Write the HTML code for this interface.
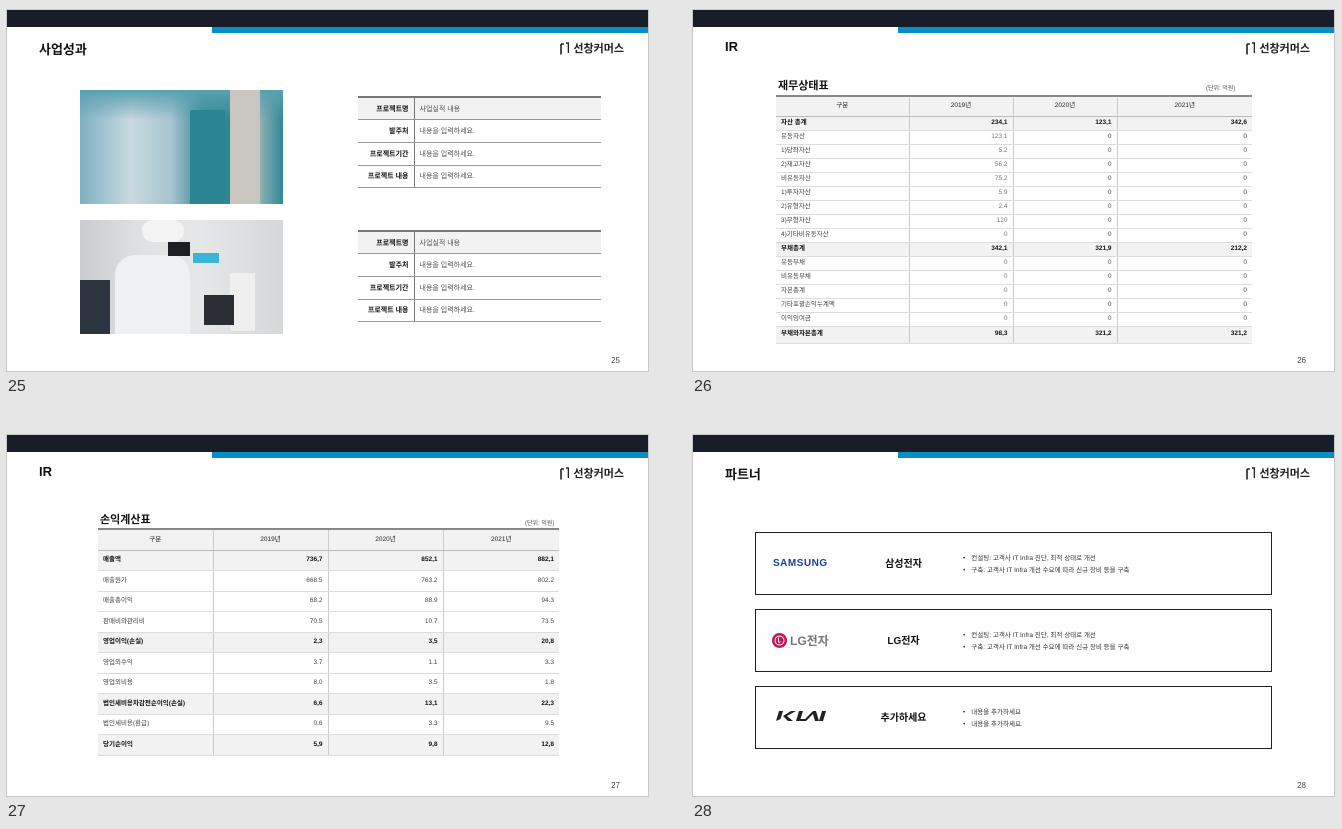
<!DOCTYPE html>
<html><head><meta charset="utf-8">
<style>
*{margin:0;padding:0;box-sizing:border-box}
body{width:1342px;height:829px;background:#e6e6e6;position:relative;overflow:hidden;font-family:"Liberation Sans","Noto Sans CJK KR",sans-serif;color:#111}
.slide{position:absolute;width:643px;height:363px;background:#fff;border:1px solid #c8c8c8;overflow:hidden}
.dark{position:absolute;left:0;top:0;width:100%;height:17px;background:#191c29}
.blue{position:absolute;left:205px;right:0;top:17px;height:6px;background:#078fc5}
.ttl{position:absolute;left:32px;top:29px;font-size:13px;font-weight:bold;color:#111}
.logo{position:absolute;right:24px;top:30px;font-size:11px;font-weight:bold;display:flex;align-items:center;gap:4px;color:#222}
.pn{position:absolute;right:28px;top:346px;font-size:8px;color:#444}
.lab{position:absolute;font-size:16px;color:#333}
table{border-collapse:collapse;position:absolute;table-layout:fixed}
td{vertical-align:middle}
.pt{width:243px;border-top:2px solid #777;font-size:7px}
.pt td{height:22.7px;border-bottom:1px solid #999}
.pt td.k{width:56px;text-align:right;padding-right:5px;font-weight:bold;border-right:1px solid #777}
.pt td.v{padding-left:5px;color:#555}
.pt tr:first-child td{background:#f2f2f2}
.ft{border-top:2px solid #888;font-size:6.5px}
.ft td{border-bottom:1px solid #ddd;border-right:1px solid #ccc;text-align:right;padding:0 5px;color:#444;line-height:1}
.ft td:last-child{border-right:none}
.ft td:first-child{text-align:left}
.ft tr.h td{background:#f2f2f2;text-align:center;color:#222;border-bottom:1px solid #bbb}
.ft tr.b td{background:#f2f2f2;font-weight:bold;color:#111}
.g2 td:nth-child(2){color:#777}
.sub{position:absolute;font-size:11px;font-weight:bold}
.unit{position:absolute;font-size:6px;color:#555}
.box{position:absolute;left:62px;width:517px;height:63px;border:1.5px solid #222}
.box .nm{position:absolute;left:100px;width:95px;top:22px;text-align:center;font-size:10px;font-weight:bold}
.box ul{position:absolute;left:207px;top:20px;font-size:6.5px;color:#333;list-style:none;line-height:11.5px}
.box li:before{content:"•";margin-right:6px}
</style></head><body>

<div class="slide" style="left:6px;top:9px">
<div class="dark"></div><div class="blue"></div>
<div class="ttl">사업성과</div>
<div class="logo"><svg width="9" height="13" viewBox="0 0 9 13"><path d="M1 2V12.5M1 2H4M6 1H8.5V11" stroke="#222" stroke-width="1.6" fill="none"/></svg>선창커머스</div>
<div style="position:absolute;left:73px;top:80px;width:203px;height:114px;background:linear-gradient(90deg,#7fb0c2 0%,#c9d9df 25%,#a7c4cf 45%,#3a8b98 60%,#2e8492 75%,#c6c7c3 82%,#2f8897 100%)"><div style="position:absolute;left:0;top:0;width:100%;height:30px;background:linear-gradient(180deg,#5aa1b1,rgba(90,161,177,0))"></div><div style="position:absolute;left:110px;top:20px;width:35px;height:94px;background:#2a8593"></div><div style="position:absolute;left:150px;top:0;width:30px;height:114px;background:#c8c6bf"></div></div>
<div style="position:absolute;left:73px;top:210px;width:203px;height:114px;background:linear-gradient(90deg,#c9ccce 0%,#dfe1e2 30%,#e6e7e8 60%,#d5d7d8 100%)"><div style="position:absolute;left:0;top:60px;width:30px;height:54px;background:#2c3440"></div><div style="position:absolute;left:35px;top:35px;width:75px;height:79px;background:#eef0f2;border-radius:20px 20px 0 0"></div><div style="position:absolute;left:62px;top:0;width:42px;height:22px;background:#f3f3f3;border-radius:20px"></div><div style="position:absolute;left:88px;top:22px;width:22px;height:14px;background:#1b1f24"></div><div style="position:absolute;left:113px;top:33px;width:26px;height:10px;background:#3bb4d8"></div><div style="position:absolute;left:150px;top:53px;width:25px;height:58px;background:#efefef"></div><div style="position:absolute;left:124px;top:75px;width:30px;height:30px;background:#2a2d33"></div></div>
<table class="pt" style="left:351px;top:86px"><tr><td class="k">프로젝트명</td><td class="v">사업실적 내용</td></tr><tr><td class="k">발주처</td><td class="v">내용을 입력하세요.</td></tr><tr><td class="k">프로젝트기간</td><td class="v">내용을 입력하세요.</td></tr><tr><td class="k">프로젝트 내용</td><td class="v">내용을 입력하세요.</td></tr></table>
<table class="pt" style="left:351px;top:220px"><tr><td class="k">프로젝트명</td><td class="v">사업실적 내용</td></tr><tr><td class="k">발주처</td><td class="v">내용을 입력하세요.</td></tr><tr><td class="k">프로젝트기간</td><td class="v">내용을 입력하세요.</td></tr><tr><td class="k">프로젝트 내용</td><td class="v">내용을 입력하세요.</td></tr></table>
<div class="pn">25</div>
</div>
<div class="lab" style="left:8px;top:378px">25</div>

<div class="slide" style="left:692px;top:9px">
<div class="dark"></div><div class="blue"></div>
<div class="ttl">IR</div>
<div class="logo"><svg width="9" height="13" viewBox="0 0 9 13"><path d="M1 2V12.5M1 2H4M6 1H8.5V11" stroke="#222" stroke-width="1.6" fill="none"/></svg>선창커머스</div>
<div class="sub" style="left:85px;top:67px">재무상태표</div>
<div class="unit" style="left:513px;top:73px">(단위: 억원)</div>
<table class="ft g2" style="left:83px;top:85px;width:476px">
<colgroup><col style="width:133px"><col style="width:104px"><col style="width:104px"><col style="width:135px"></colgroup>
<tr class="h" style="height:20px"><td>구분</td><td>2019년</td><td>2020년</td><td>2021년</td></tr>
<tr class="b" style="height:14px"><td>자산 총계</td><td>234,1</td><td>123,1</td><td>342,6</td></tr>
<tr style="height:14px"><td>유동자산</td><td>123.1</td><td>0</td><td>0</td></tr>
<tr style="height:14px"><td>1)당좌자산</td><td>5.2</td><td>0</td><td>0</td></tr>
<tr style="height:14px"><td>2)재고자산</td><td>56.2</td><td>0</td><td>0</td></tr>
<tr style="height:14px"><td>비유동자산</td><td>75.2</td><td>0</td><td>0</td></tr>
<tr style="height:14px"><td>1)투자자산</td><td>5.9</td><td>0</td><td>0</td></tr>
<tr style="height:14px"><td>2)유형자산</td><td>2.4</td><td>0</td><td>0</td></tr>
<tr style="height:14px"><td>3)무형자산</td><td>120</td><td>0</td><td>0</td></tr>
<tr style="height:14px"><td>4)기타비유동자산</td><td>0</td><td>0</td><td>0</td></tr>
<tr class="b" style="height:14px"><td>부채총계</td><td>342,1</td><td>321,9</td><td>212,2</td></tr>
<tr style="height:14px"><td>유동부채</td><td>0</td><td>0</td><td>0</td></tr>
<tr style="height:14px"><td>비유동부채</td><td>0</td><td>0</td><td>0</td></tr>
<tr style="height:14px"><td>자본총계</td><td>0</td><td>0</td><td>0</td></tr>
<tr style="height:14px"><td>기타포괄손익누계액</td><td>0</td><td>0</td><td>0</td></tr>
<tr style="height:14px"><td>이익잉여금</td><td>0</td><td>0</td><td>0</td></tr>
<tr class="b" style="height:17px"><td>부채와자본총계</td><td>98,3</td><td>321,2</td><td>321,2</td></tr>
</table>
<div class="pn">26</div>
</div>
<div class="lab" style="left:694px;top:378px">26</div>

<div class="slide" style="left:6px;top:434px">
<div class="dark"></div><div class="blue"></div>
<div class="ttl">IR</div>
<div class="logo"><svg width="9" height="13" viewBox="0 0 9 13"><path d="M1 2V12.5M1 2H4M6 1H8.5V11" stroke="#222" stroke-width="1.6" fill="none"/></svg>선창커머스</div>
<div class="sub" style="left:93px;top:76px">손익계산표</div>
<div class="unit" style="left:518px;top:83px">(단위: 억원)</div>
<table class="ft" style="left:91px;top:93px;width:461px">
<colgroup><col style="width:115px"><col style="width:115px"><col style="width:115px"><col style="width:116px"></colgroup>
<tr class="h" style="height:21px"><td>구분</td><td>2019년</td><td>2020년</td><td>2021년</td></tr>
<tr class="b" style="height:20.5px"><td>매출액</td><td>736,7</td><td>852,1</td><td>882,1</td></tr>
<tr style="height:20.5px"><td>매출원가</td><td>668.5</td><td>763.2</td><td>802.2</td></tr>
<tr style="height:20.5px"><td>매출총이익</td><td>68.2</td><td>88.9</td><td>94.3</td></tr>
<tr style="height:20.5px"><td>판매비와관리비</td><td>70.5</td><td>10.7</td><td>73.5</td></tr>
<tr class="b" style="height:20.5px"><td>영업이익(손실)</td><td>2,3</td><td>3,5</td><td>20,8</td></tr>
<tr style="height:20.5px"><td>영업외수익</td><td>3.7</td><td>1.1</td><td>3.3</td></tr>
<tr style="height:20.5px"><td>영업외비용</td><td>8.0</td><td>3.5</td><td>1.8</td></tr>
<tr class="b" style="height:20.5px"><td>법인세비용차감전순이익(손실)</td><td>6,6</td><td>13,1</td><td>22,3</td></tr>
<tr style="height:20.5px"><td>법인세비용(환급)</td><td>0.6</td><td>3.3</td><td>9.5</td></tr>
<tr class="b" style="height:20.5px"><td>당기순이익</td><td>5,9</td><td>9,8</td><td>12,8</td></tr>
</table>
<div class="pn">27</div>
</div>
<div class="lab" style="left:8px;top:803px">27</div>

<div class="slide" style="left:692px;top:434px">
<div class="dark"></div><div class="blue"></div>
<div class="ttl">파트너</div>
<div class="logo"><svg width="9" height="13" viewBox="0 0 9 13"><path d="M1 2V12.5M1 2H4M6 1H8.5V11" stroke="#222" stroke-width="1.6" fill="none"/></svg>선창커머스</div>
<div class="box" style="top:97px"><div style="position:absolute;left:17px;top:25px;font-size:10px;font-weight:bold;color:#1a3d9b;letter-spacing:0.5px">SAMSUNG</div><div class="nm">삼성전자</div><ul><li>컨설팅: 고객사 IT Infra 진단, 최적 상태로 개선</li><li>구축: 고객사 IT Infra 개선 수요에 따라 신규 장비 등을 구축</li></ul></div>
<div class="box" style="top:174px"><div style="position:absolute;left:16px;top:22px;display:flex;align-items:center;gap:3px"><svg width="15" height="15" viewBox="0 0 15 15"><circle cx="7.5" cy="7.5" r="7.5" fill="#c4145a"/><circle cx="7.5" cy="7.5" r="4.5" fill="none" stroke="#fff" stroke-width="1"/><path d="M6.5 4.5V9H8.5" stroke="#fff" stroke-width="1" fill="none"/></svg><span style="font-size:12px;font-weight:bold;color:#777">LG전자</span></div><div class="nm">LG전자</div><ul><li>컨설팅: 고객사 IT Infra 진단, 최적 상태로 개선</li><li>구축: 고객사 IT Infra 개선 수요에 따라 신규 장비 등을 구축</li></ul></div>
<div class="box" style="top:251px"><svg style="position:absolute;left:19px;top:23px" width="52" height="12" viewBox="0 0 52 12"><path d="M1 11L4 1H8L5.5 9ZM8 6L16 1H21L12 6L18 11H13Z M21 11L24 1H28L25.5 9H30L28 11Z M31 11L38 4L40 11H44L47 1H51L48 11H44L41 1H38L28 11" fill="#222"/></svg><div class="nm">추가하세요</div><ul><li>내용을 추가하세요</li><li>내용을 추가하세요.</li></ul></div>
<div class="pn">28</div>
</div>
<div class="lab" style="left:694px;top:803px">28</div>

</body></html>
